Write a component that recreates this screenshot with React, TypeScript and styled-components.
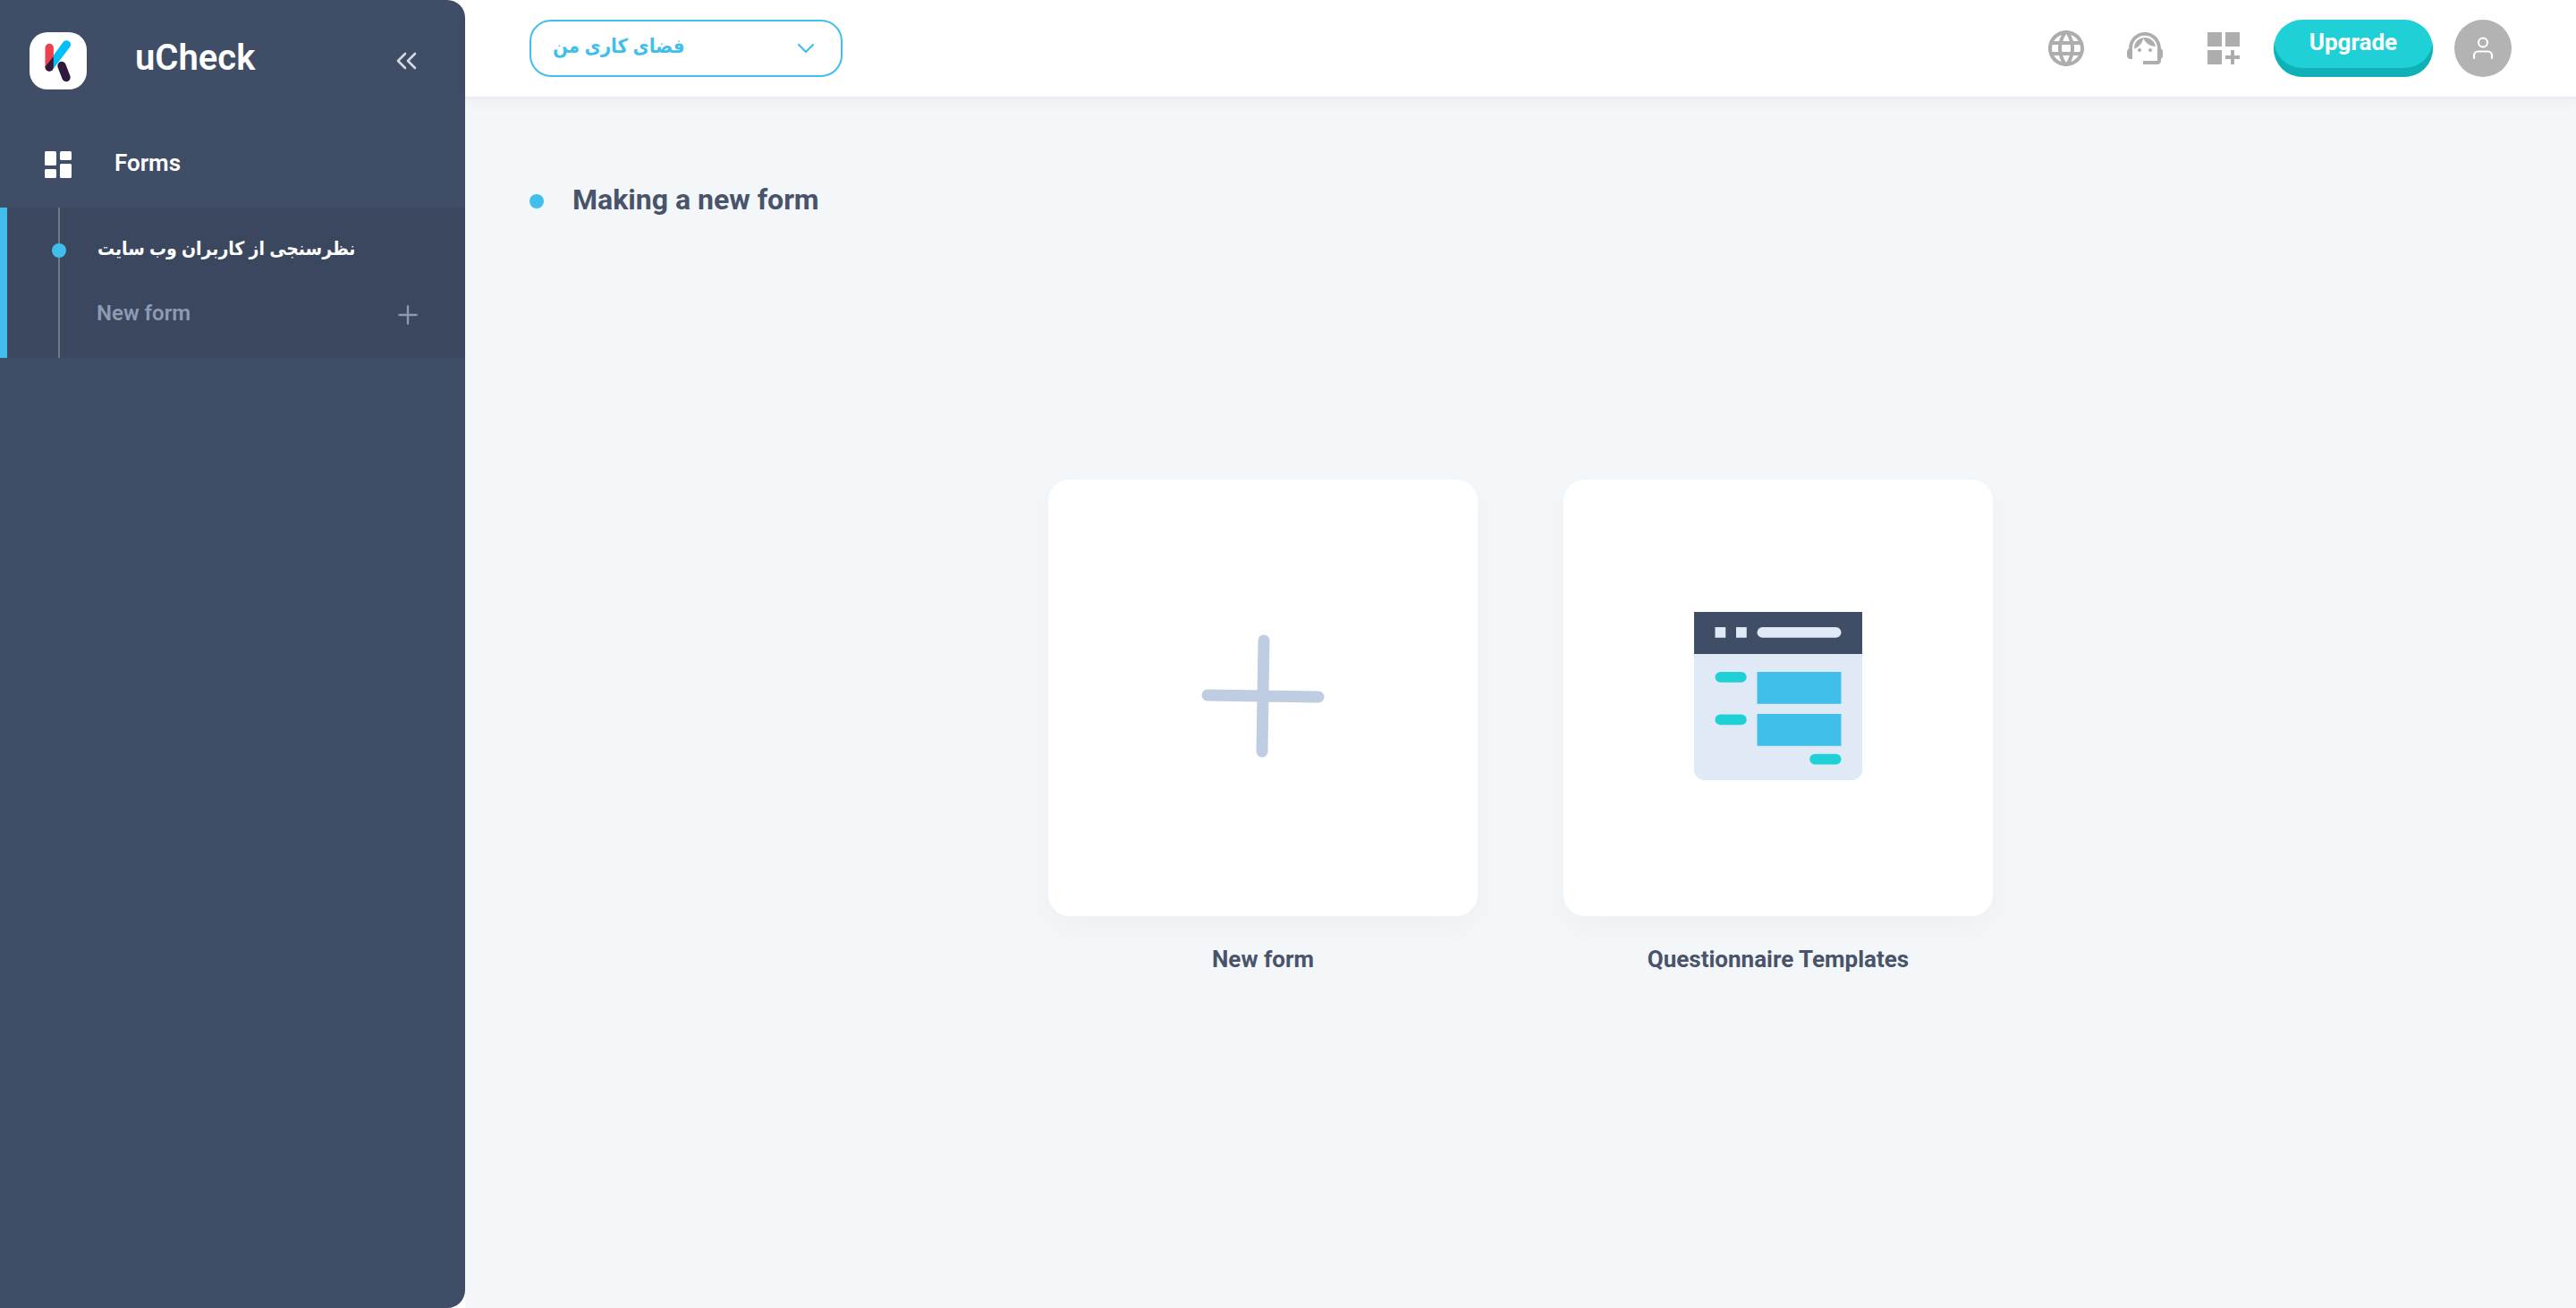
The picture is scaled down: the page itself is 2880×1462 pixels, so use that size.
import React from "react";
import styled, { createGlobalStyle } from "styled-components";
import { MdDashboardCustomize, MdLanguage } from "react-icons/md";

const ink = "#404d66";
const sky = "#40bfeb";

const GlobalStyle = createGlobalStyle`
  *, *::before, *::after { box-sizing: border-box; }
  body {
    margin: 0;
    background: #fff;
    color: #495369;
    font-family: Roboto, "DejaVu Sans Condensed", "DejaVu Sans", sans-serif;
    font-size: 26px;
    line-height: 32px;
    font-weight: 700;
  }
  button, select { font: inherit; color: inherit; border: 0; background: none; padding: 0; cursor: pointer; }
  a { color: inherit; text-decoration: none; }
  h1, p, ul { margin: 0; padding: 0; font: inherit; list-style: none; }
  svg { display: block; flex: none; }
`;

const Page = styled.div`
  display: flex;
  min-height: 100vh;
`;

const Sidebar = styled.aside`
  flex: 0 0 520px;
  background: ${ink};
  color: #fff;
  border-radius: 0 20px 20px 0;
`;

const Brand = styled.div`
  display: flex;
  align-items: center;
  padding: 36px 42px 0 33px;
`;

const Logo = styled.a`
  width: 64px;
  height: 64px;
  border-radius: 20px;
  background: #fff;
`;

const BrandName = styled.p`
  flex: 1;
  padding: 0 0 6px 54px;
  font-size: 40px;
  line-height: 48px;
  font-weight: 600;
`;

const IconButton = styled.button<{ $color: string }>`
  display: grid;
  place-items: center;
  width: 48px;
  height: 48px;
  color: ${(p) => p.$color};
`;

const SectionLink = styled.a`
  display: flex;
  align-items: center;
  gap: 42px;
  height: 64px;
  margin-top: 52px;
  margin-bottom: 16px;
  padding-left: 44px;
  font-weight: 600;

  span { padding-bottom: 4px; }
`;

const SubMenu = styled.ul`
  display: flex;
  flex-direction: column;
  height: 168px;
  padding: 16px 40px 8px 50px;
  border-left: 8px solid ${sky};
  background: linear-gradient(#6f7a88, #6f7a88) 57px 0 / 2px 100% no-repeat #3b475f;
`;

const SubItem = styled.li<{ $muted?: boolean }>`
  display: flex;
  align-items: center;
  height: ${(p) => (p.$muted ? "80px" : "64px")};
  color: ${(p) => (p.$muted ? "#8b9bb4" : "#fff")};
  font-size: 24px;
  font-weight: ${(p) => (p.$muted ? 600 : 700)};
`;

const Dot = styled.span`
  flex: none;
  width: 16px;
  height: 16px;
  border-radius: 50%;
  background: ${sky};
`;

const FormLink = styled.a`
  padding: 0 0 4px 35px;
  font-size: 21px;
  white-space: nowrap;
`;

const AddForm = styled.button`
  display: flex;
  flex: 1;
  align-items: center;
  justify-content: space-between;
  padding-left: 50px;

  span { padding-bottom: 4px; }
`;

const Main = styled.main`
  display: flex;
  flex: 1;
  flex-direction: column;
  min-width: 0;
  background: #f3f7fa;
`;

const TopBar = styled.header`
  display: flex;
  align-items: center;
  justify-content: space-between;
  height: 110px;
  padding: 0 72px;
  border-bottom: 2px solid #e9ecf4;
  background: #fff;
  box-shadow: 0 4px 16px rgba(0, 0, 0, 0.04);
`;

const Workspace = styled.label`
  display: grid;
  align-items: center;
  width: 350px;
  height: 64px;
  border: 2px solid ${sky};
  border-radius: 24px;
  color: ${sky};

  select, svg { grid-area: 1 / 1; }
  svg { justify-self: end; margin-right: 28px; pointer-events: none; }
  select {
    width: 100%;
    height: 60px;
    padding: 0 24px 4px;
    appearance: none;
    outline: 0;
    font-size: 22px;
  }
`;

const Tools = styled.div`
  display: flex;
  align-items: center;
  gap: 40px;
`;

const Account = styled.div`
  display: flex;
  align-items: center;
  gap: 24px;
  margin-left: -8px;
`;

const Upgrade = styled.button`
  width: 178px;
  height: 64px;
  padding-bottom: 14px;
  border-radius: 32px;
  background: #1fd1d7;
  box-shadow: inset 0 -10px #0fb1b9;
  color: #fff;
`;

const Avatar = styled.button`
  display: grid;
  place-items: center;
  width: 64px;
  height: 64px;
  border-radius: 50%;
  background: #b3b3b3;
  color: #fff;
`;

const Title = styled.div`
  display: flex;
  align-items: center;
  gap: 32px;
  padding: 93px 72px 0;

  h1 { padding-bottom: 4px; font-size: 32px; line-height: 40px; }
`;

const Choices = styled.div`
  display: flex;
  flex: 1;
  align-items: center;
  justify-content: center;
  gap: 96px;
  padding-bottom: 86px;
`;

const Choice = styled.button`
  display: flex;
  flex-direction: column;
  gap: 32px;
  align-items: center;
  width: 480px;
`;

const Card = styled.span`
  display: grid;
  place-items: center;
  width: 100%;
  height: 488px;
  padding-bottom: 4px;
  border-radius: 24px;
  background: #fff;
  box-shadow: 0 12px 32px rgba(0, 0, 0, 0.03);
`;

const LogoMark = () => (
  <svg width="64" height="64" viewBox="0 0 64 64" fill="none" strokeLinecap="round">
    <path d="M36 37.500 41 50.500" stroke="#2f1a3d" strokeWidth="9.400" />
    <path d="M22.200 17.500v21.500" stroke="#ee404e" strokeWidth="9.400" />
    <path d="M17.500 38.600 26.900 27v12a4.700 4.700 0 0 1-9.400 0z" fill="#2f1a3d" />
    <path d="M26.900 40.500V25.800L37.400 11.200c4-4.800 11-.1 7.800 5.400z" fill="#00c0f7" />
  </svg>
);

const SupportIcon = () => (
  <svg width="48" height="48" viewBox="0 0 24 24" fill="currentColor">
    <path d="M21 12.220C21 6.730 16.740 3 12 3c-4.690 0-9 3.650-9 9.280-.6.340-1 .980-1 1.720v2c0 1.100.900 2 2 2h1v-6.100c0-3.870 3.130-7 7-7s7 3.130 7 7V19h-8v2h8c1.100 0 2-.900 2-2v-1.220c.590-.310 1-.920 1-1.640v-2.300c0-.700-.410-1.310-1-1.620z" />
    <circle cx="9" cy="13" r="1" />
    <circle cx="15" cy="13" r="1" />
    <path d="M11.200 6.100C8 6.400 5.800 9 6.100 12.300C8.600 11.300 10.500 9.200 11.200 6.500C12.500 9.200 15 10.900 18 11C17.500 8.200 15 6 12 6z" />
  </svg>
);

const TemplateArt = () => (
  <svg width="188" height="188" viewBox="0 0 16 16">
    <path d="M0 4h16v11a1 1 0 0 1-1 1H1a1 1 0 0 1-1-1z" fill="#e0eaf7" />
    <path d="M0 0h16v4H0z" fill={ink} />
    <path d="M2 1.450h1v1H2zM4 1.450h1v1H4z" fill="#e0eaf7" />
    <rect x="6" y="1.450" width="8" height="1" rx=".5" fill="#e0eaf7" />
    <path d="M6 5.700h8v3.050H6zM6 9.700h8v3.050H6z" fill={sky} />
    <g fill="#1fd1d7">
      <rect x="2" y="5.700" width="3" height="1" rx=".5" />
      <rect x="2" y="9.750" width="3" height="1" rx=".5" />
      <rect x="11" y="13.500" width="3" height="1" rx=".5" />
    </g>
  </svg>
);

export default function App() {
  return (
    <Page>
      <GlobalStyle />
      <Sidebar>
        <Brand>
          <Logo href="#" aria-label="Home"><LogoMark /></Logo>
          <BrandName>uCheck</BrandName>
          <IconButton $color="#d5d9e1" aria-label="Collapse menu">
            <svg width="24" height="24" viewBox="0 0 24 24" fill="none" stroke="currentColor" strokeWidth="2.600" strokeLinecap="round" strokeLinejoin="round">
              <path d="M11 4 3 12l8 8M22 4l-8 8 8 8" />
            </svg>
          </IconButton>
        </Brand>
        <nav>
          <SectionLink href="#">
            <svg width="42" height="42" viewBox="0 0 42 42" fill="currentColor">
              <rect x="6" y="6" width="13" height="16" rx="1.500" />
              <rect x="6" y="26" width="13" height="10" rx="1.500" />
              <rect x="23" y="6" width="13" height="10" rx="1.500" />
              <rect x="23" y="20" width="13" height="16" rx="1.500" />
            </svg>
            <span>Forms</span>
          </SectionLink>
          <SubMenu>
            <SubItem>
              <Dot />
              <FormLink href="#" lang="fa">نظرسنجی از کاربران وب سایت</FormLink>
            </SubItem>
            <SubItem $muted>
              <AddForm>
                <span>New form</span>
                <svg width="48" height="24" viewBox="0 0 48 24" fill="none" stroke="currentColor" strokeWidth="2.400" strokeLinecap="round">
                  <path d="M14.500 12h19M24 2.500v19" />
                </svg>
              </AddForm>
            </SubItem>
          </SubMenu>
        </nav>
      </Sidebar>
      <Main>
        <TopBar>
          <Workspace>
            <select aria-label="Workspace" lang="fa">
              <option>فضای کاری من</option>
            </select>
            <svg width="22" height="22" viewBox="0 0 22 22" fill="none" stroke="currentColor" strokeWidth="2.200" strokeLinecap="round" strokeLinejoin="round">
              <path d="m3 7 8 8 8-8" />
            </svg>
          </Workspace>
          <Tools>
            <IconButton $color="#adadad" aria-label="Language"><MdLanguage size={48} /></IconButton>
            <IconButton $color="#adadad" aria-label="Support"><SupportIcon /></IconButton>
            <IconButton $color="#adadad" aria-label="Apps"><MdDashboardCustomize size={48} /></IconButton>
            <Account>
              <Upgrade>Upgrade</Upgrade>
              <Avatar aria-label="Profile">
                <svg width="28" height="28" viewBox="0 0 28 28" fill="none" stroke="currentColor" strokeWidth="2.200" strokeLinecap="round">
                  <circle cx="14" cy="7.500" r="5" />
                  <path d="M4 25v-3a4.500 4.500 0 0 1 4.500-4.500h11A4.500 4.500 0 0 1 24 22v3" />
                </svg>
              </Avatar>
            </Account>
          </Tools>
        </TopBar>
        <Title>
          <Dot />
          <h1>Making a new form</h1>
        </Title>
        <Choices>
          <Choice>
            <Card>
              <svg width="138" height="138" viewBox="0 0 138 138" stroke="#bfcde3" strokeWidth="13" strokeLinecap="round">
                <path d="M7 68 131 70M70 7 68 131" />
              </svg>
            </Card>
            <span>New form</span>
          </Choice>
          <Choice>
            <Card><TemplateArt /></Card>
            <span>Questionnaire Templates</span>
          </Choice>
        </Choices>
      </Main>
    </Page>
  );
}
